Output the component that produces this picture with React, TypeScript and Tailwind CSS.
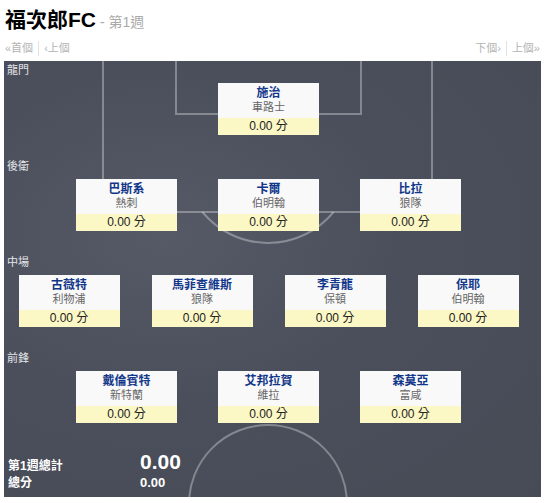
import React from "react";

type Player = { name: string; club: string; score: string };

const rows: { label: string; gap: string; players: Player[] }[] = [
  { label: "龍門", gap: "gap-[41px]", players: [{ name: "施治", club: "車路士", score: "0.00" }] },
  {
    label: "後衛",
    gap: "gap-[41px]",
    players: [
      { name: "巴斯系", club: "熱刺", score: "0.00" },
      { name: "卡爾", club: "伯明翰", score: "0.00" },
      { name: "比拉", club: "狼隊", score: "0.00" },
    ],
  },
  {
    label: "中場",
    gap: "gap-[32px]",
    players: [
      { name: "古薇特", club: "利物浦", score: "0.00" },
      { name: "馬菲查維斯", club: "狼隊", score: "0.00" },
      { name: "李青龍", club: "保頓", score: "0.00" },
      { name: "保耶", club: "伯明翰", score: "0.00" },
    ],
  },
  {
    label: "前鋒",
    gap: "gap-[41px]",
    players: [
      { name: "戴倫賓特", club: "新特蘭", score: "0.00" },
      { name: "艾邦拉賀", club: "維拉", score: "0.00" },
      { name: "森莫亞", club: "富咸", score: "0.00" },
    ],
  },
];

function PlayerCard({ p }: { p: Player }) {
  return (
    <div className="w-[101px] h-[52px] bg-[#f9f9f9] flex flex-col text-center">
      <div className="h-[35px] pt-[3px]">
        <div className="text-[12px] leading-[14px] font-bold text-[#12378a]">{p.name}</div>
        <div className="text-[11px] leading-[14px] text-[#666]">{p.club}</div>
      </div>
      <div className="h-[17px] bg-[#fcf8c6] text-[12px] leading-[17px] text-[#222]">{p.score} 分</div>
    </div>
  );
}

function PitchLines() {
  const line = "rgba(255,255,255,0.32)";
  return (
    <svg className="absolute inset-0" width="537" height="436" viewBox="0 0 537 436">
      <g fill="none" stroke={line} strokeWidth="2">
        <path d="M99 0 V151 H428 V0" />
        <path d="M172 0 V53 H357 V0" />
        <path d="M198.4 151 A85 85 0 0 0 329.6 151" />
        <circle cx="264" cy="443" r="79" />
      </g>
    </svg>
  );
}

export default function App() {
  return (
    <div className="w-[545px] h-[503px] bg-white font-['Liberation_Sans','Noto_Sans_CJK_TC',sans-serif] overflow-hidden">
      <div className="px-[5px] pt-[7px] h-[36px]">
        <h1 className="text-[21px] leading-[26px] font-bold text-black">
          福次郎FC
          <span className="text-[14px] font-normal text-[#aaa]"> - 第1週</span>
        </h1>
      </div>
      <div className="flex justify-between items-center h-[25px] px-[5px] text-[11px] text-[#b4b4b4]">
        <div className="flex items-center">
          <span>«首個</span>
          <span className="mx-[5px] h-[15px] w-px bg-[#e2e2e2]" />
          <span>‹上個</span>
        </div>
        <div className="flex items-center">
          <span>下個›</span>
          <span className="mx-[5px] h-[15px] w-px bg-[#e2e2e2]" />
          <span>上個»</span>
        </div>
      </div>
      <div className="relative mx-[4px] w-[537px] h-[436px] bg-[#4b4f5b] bg-[radial-gradient(ellipse_at_30%_40%,#555a66_0%,#4b4f5b_45%,#474b56_100%)]">
        <PitchLines />
        <div className="relative">
          {rows.map((r) => (
            <div key={r.label} className="h-[96px]">
              <div className="h-[22px] pl-[3px] pt-[2px] text-[11px] leading-[14px] text-[#e4e6ea]">{r.label}</div>
              <div className={`flex justify-center pr-[8px] ${r.gap}`}>
                {r.players.map((p) => (
                  <PlayerCard key={p.name} p={p} />
                ))}
              </div>
            </div>
          ))}
          <div className="flex pl-[4px] pt-[6px] text-white font-bold">
            <div className="w-[132px]">
              <div className="h-[22px] pt-[8px] text-[12px] leading-[14px]">第1週總計</div>
              <div className="h-[20px] pt-[3px] text-[12px] leading-[14px]">總分</div>
            </div>
            <div>
              <div className="h-[22px] text-[21px] leading-[22px]">0.00</div>
              <div className="h-[20px] pt-[2px] text-[13px] leading-[16px]">0.00</div>
            </div>
          </div>
        </div>
      </div>
    </div>
  );
}
